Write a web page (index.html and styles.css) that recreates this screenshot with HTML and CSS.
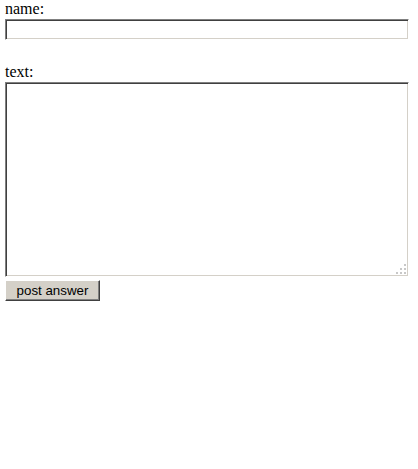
FILE: index.html
```html
<!DOCTYPE html>
<html>
<head>
<meta charset="utf-8">
<link rel="stylesheet" href="styles.css">
</head>
<body>
<form class="form">
  <label class="label label-name" for="name">name:</label>
  <input class="field field-input" id="name" type="text">
  <label class="label label-text" for="text">text:</label>
  <div class="area-wrap">
    <textarea class="field field-area" id="text"></textarea>
    <svg class="grip" width="10" height="10" viewBox="0 0 10 10">
      <rect x="8" y="0" width="2" height="2" fill="#c8c8c8"/>
      <rect x="4" y="4" width="2" height="2" fill="#c8c8c8"/>
      <rect x="8" y="4" width="2" height="2" fill="#c8c8c8"/>
      <rect x="0" y="8" width="2" height="2" fill="#c8c8c8"/>
      <rect x="4" y="8" width="2" height="2" fill="#c8c8c8"/>
      <rect x="8" y="8" width="2" height="2" fill="#c8c8c8"/>
    </svg>
  </div>
  <div class="actions">
    <button class="btn" type="button">post answer</button>
  </div>
</form>
</body>
</html>
```

FILE: styles.css
```css
html, body {
  margin: 0;
  padding: 0;
  background: #ffffff;
}

body {
  font-family: "Liberation Serif", "Times New Roman", serif;
  font-size: 16px;
  color: #000000;
}

.form {
  display: flex;
  flex-direction: column;
  align-items: flex-start;
  padding: 0 10px 0 5px;
  margin: 0;
}

.label {
  display: block;
  line-height: 18px;
  height: 18px;
}

.label-text {
  margin-top: 23px;
}

.field {
  box-sizing: border-box;
  width: 404px;
  margin: 0;
  padding: 0;
  background: #ffffff;
  border-style: solid;
  border-width: 1px;
  border-color: #808080 #ffffff #ffffff #808080;
  box-shadow: inset 1px 1px 0 #404040, inset -1px -1px 0 #d4d0c8;
  outline: none;
  font-family: "Liberation Sans", Arial, sans-serif;
  font-size: 13px;
}

.field-input {
  height: 21px;
  margin-top: 1px;
}

.area-wrap {
  position: relative;
  margin-top: 1px;
  width: 404px;
  height: 195px;
}

.field-area {
  display: block;
  height: 195px;
  resize: none;
}

.grip {
  position: absolute;
  right: 3px;
  bottom: 3px;
  display: block;
}

.actions {
  margin-top: 3px;
}

.btn {
  box-sizing: border-box;
  width: 95px;
  height: 21px;
  margin: 0;
  padding: 0;
  background: #d4d0c8;
  border-style: solid;
  border-width: 1px;
  border-color: #ffffff #404040 #404040 #ffffff;
  box-shadow: inset -1px -1px 0 #808080, inset 1px 1px 0 #d4d0c8;
  font-family: "Liberation Sans", Arial, sans-serif;
  font-size: 13.33px;
  color: #000000;
  line-height: 17px;
}
```
